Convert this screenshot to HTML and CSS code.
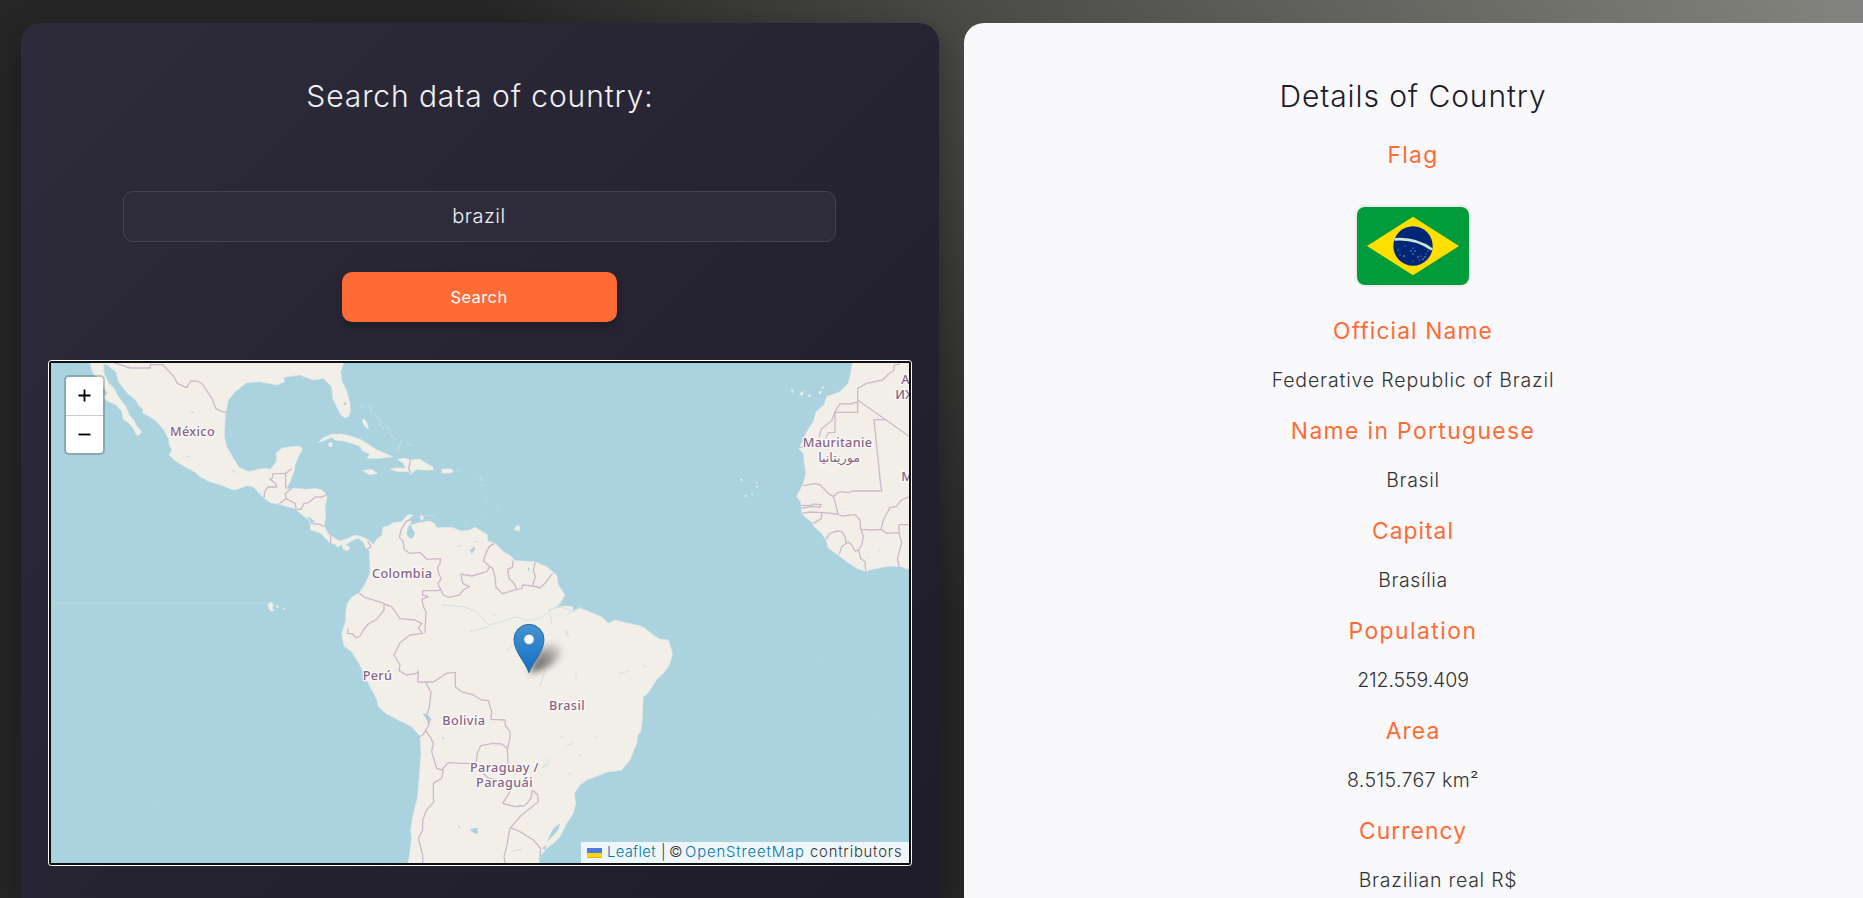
FILE: index.html
```html
<!DOCTYPE html>
<html lang="en">
<head>
<meta charset="utf-8">
<title>Search data of country</title>
<link rel="stylesheet" href="styles.css">
</head>
<body>
<main class="layout">
  <section class="card card-search">
    <h1 class="title title-search">Search data of country:</h1>
    <form class="form">
      <div class="field"><span class="field-value">brazil</span></div>
      <button class="button" type="button"><span>Search</span></button>
    </form>
    <div class="map">
      <svg class="map-canvas" viewBox="33 39 2574 1500" width="858" height="500">
        <defs>
          <linearGradient id="pin" x1="0" y1="0" x2="0" y2="1"><stop offset="0" stop-color="#4594d0"/><stop offset="1" stop-color="#126fc6"/></linearGradient>
          <filter id="soft" x="-50%" y="-50%" width="200%" height="200%"><feGaussianBlur stdDeviation="11"/></filter>
          <linearGradient id="shade" x1="0" y1="1" x2="1" y2="0"><stop offset="0" stop-color="#000" stop-opacity=".65"/><stop offset=".5" stop-color="#000" stop-opacity=".42"/><stop offset="1" stop-color="#000" stop-opacity=".02"/></linearGradient>
        </defs>
        <rect x="33" y="39" width="2574" height="1500" fill="#abd3df"/>
        <path d="M33 759H690" stroke="#b9d8dd" stroke-width="3"/>
        <g class="land">
          <path d="M150 36L155 60 163 75 178 86 190 110 203 130 192 140 200 152 225 163 245 183 250 208 265 218 280 235 287 252 295 257 305 245 290 228 280 208 268 195 258 170 235 140 222 115 205 98 192 70 190 42 205 46 213 54 228 65 236 95 262 130 285 148 298 168 310 178 307 188 320 195 345 210 372 240 385 265 388 285 396 300 387 315 405 332 435 350 465 366 480 380 510 395 545 406 580 420 600 415 620 407 640 411 668 440 690 458 715 462 740 470 765 475 780 490 800 505 810 515 812 540 840 548 860 568 870 580 885 583 893 592 905 583 910 598 920 603 930 596 925 588 915 585 935 572 955 565 970 576 980 598 988 602 990 640 990 670 975 703 958 728 935 742 922 760 918 780 917 812 905 852 912 888 935 905 960 945 985 1000 1010 1047 1015 1070 1040 1092 1070 1107 1115 1130 1140 1158 1143 1210 1138 1280 1132 1345 1118 1400 1112 1440 1115 1465 1108 1520 1102 1545H1500L1495 1525 1520 1495 1540 1480 1560 1460 1580 1420 1600 1390 1607 1360 1603 1330 1620 1305 1640 1290 1700 1267 1745 1260 1770 1230 1790 1180 1793 1155 1802 1146 1808 1100 1808 1070 1810 1040 1818 1035 1830 1020 1850 988 1870 970 1885 950 1895 925 1897 908 1885 870 1860 868 1840 855 1815 835 1800 827 1765 820 1725 810 1705 820 1685 800 1660 790 1620 774 1600 785 1597 770 1570 768 1550 775 1575 735 1555 705 1550 675 1520 650 1485 635 1425 632 1412 618 1390 605 1365 580 1343 573 1343 555 1328 545 1305 532 1290 540 1265 543 1235 532 1190 533 1183 520 1170 513 1135 518 1115 525 1108 505 1120 497 1112 492 1100 497 1085 515 1060 518 1045 528 1028 532 1027 555 1010 567 1000 585 990 573 970 562 945 555 920 567 900 573 880 562 865 552 852 528 857 500 855 470 862 435 845 420 825 415 800 418 765 415 738 418 750 395 762 365 765 345 775 320 787 298 780 289 750 290 725 295 708 310 710 333 692 358 675 355 655 358 625 365 597 352 590 340 580 325 560 290 553 260 556 195 565 150 585 125 620 98 660 95 710 105 735 95 730 82 780 75 820 90 850 85 875 110 878 145 890 170 903 195 915 204 925 200 931 185 930 160 920 122 905 92 902 65 912 36Z"/>
          <path d="M835 278L850 263 875 253 905 252 930 258 960 268 985 283 1010 300 1040 312 1058 320 1020 325 982 325 990 312 968 303 958 288 930 278 905 272 885 270 875 262 855 270Z"/>
          <path d="M1072 328L1095 325 1110 330 1140 327 1150 335 1178 350 1180 360 1150 360 1130 358 1120 365 1113 375 1105 365 1075 365 1050 358 1065 354 1097 355 1090 340ZM968 362L995 358 1012 370 990 375ZM1206 357H1235L1240 363 1232 369H1206ZM865 280L875 278 878 288 868 291ZM970 205L980 215 985 237 975 230 967 215ZM1427 528L1440 528 1438 543 1424 540ZM1140 498l8-2 3 10-7 5z"/>
          <path d="M2438 36L2431 75 2425 100 2400 125 2360 140 2352 165 2328 185 2320 215 2300 245 2287 275 2276 295 2290 310 2293 340 2298 370 2288 405 2270 440 2282 455 2285 490 2300 505 2315 515 2322 530 2345 550 2358 570 2365 595 2395 615 2420 635 2450 655 2477 664 2500 657 2550 648 2585 650 2600 657 2615 652V36Z"/>
          <path d="M684 762l12-6 4 12-6 6 10 6-12 4-6-10zM708 770l6-3 1 7zM730 775l5-2v6zM2255 118l5 3-3 8zM2280 130l10-6-2 10-6 3zM2303 136l7-3 1 9zM2335 128l8-6-2 10zM2343 115l9-7-2 6zM2100 388h7v6zM2148 396l5 2-4 2zM2148 408l7 2-5 4zM2133 433l5-2v5zM2114 437l7-2-3 6z"/>
        </g>
        <path class="islets" d="M960 171l12-3M985 165l10 8-1 12M1005 195l20 22M1015 215l15 24M1040 230l14 12M1045 248l18 10M1050 260l20 10M1085 270l-10 28-8 2M1100 280l15 7M1140 495l15 2M1160 500l10-5M1170 495l12 2M1250 362l12-1M1290 365l5 5M1300 382l6 4M1320 376l4 10M2332 930h4M2515 1106h4M344 1360v5M1325 388l6 5M1322 405l8 5M1334 421l3 6M1336 440l4 5M1338 457v5M1368 475l5 2M1323 498h4M1270 521l7 5"/>
        <g class="water">
          <path d="M1103 535L1110 520 1116 535 1125 548 1120 562 1110 566 1100 552ZM1290 600l12-10 3 8-10 15zM1462 655l8-3-3 12zM911 158l8-2-1 10-6-2zM800 500l12 4 14 12-12 2zM2295 515l8-3 2 8-8 2zM1147 1090l15 2 12 15-6 15-10-18zM1205 1160l10 5-5 3zM1288 1438l24-5 2 18-12-1zM1254 1426l6 3-3 6zM435 318l14 1-5 3zM445 186h18l-4 3zM576 358l9 8-3 3zM1540 1435l20-15-5 20-20 22-15 14zM1430 1367l16-3-10 9zM1505 1495l15-10-4 14z"/>
        </g>
        <g class="rivers">
          <path d="M1205 764L1270 770 1310 785 1345 825 1370 820 1400 810 1430 800 1460 812 1500 805 1540 775 1570 755M1290 845L1345 830M1400 905L1435 870 1430 835M1525 780L1560 770 1600 785M1620 770L1580 795M1735 970L1750 968 1768 962M1608 970v20M1525 1240L1508 1252 1530 1225M1575 845l10 15-5-20M1530 790l5 30M1500 1010l15-50M1560 1160l12 2M1580 1185l18-4M1667 1162l8-4M1615 1212l10 5M1580 1270l12 2M1250 590l15-3M1355 790l15 10M1810 945l12 6M1300 575l15-2M1475 1295l3 22M1415 1505l30-8M2412 475l8 4M2515 600l6 6M2483 622l8 0"/>
        </g>
        <g class="borders">
          <path d="M225 39L270 54H331V44H368L400 78 412 100 440 113 452 93H472L487 102 517 148 527 175 545 184 565 188M672 444L674 425 684 411H710L708 402 690 387 697 385 699 371H737V415M737 371L755 355M718 461L738 446 736 430 755 416M738 446L765 460 768 475M768 478L783 478 792 460 805 458 827 440 842 442 864 433M812 520L840 523 852 530M872 552V582M984 574L993 590 978 600M1111 330L1108 348 1105 354 1113 370"/>
          <path d="M1116 505L1098 515 1083 540 1078 562 1090 575 1092 597 1108 610 1140 607 1160 628 1202 626 1200 640 1193 652 1196 670 1204 687 1193 700 1210 735 1228 742 1258 735 1270 720 1288 710 1268 700 1263 672 1295 678 1340 665 1350 650 1330 632 1340 605 1348 590 1363 580M1205 716L1195 722H1148V735L1165 740 1146 748 1150 770 1158 785 1155 850M958 730L975 742 1032 760 1032 780 1010 808 985 822 970 840 960 858 948 864 938 852 922 850 925 835M1032 762L1055 770 1080 806 1125 810 1145 820 1135 835 1148 850 1110 855 1080 878 1062 915 1080 945 1077 962 1100 975 1130 970 1135 963 1134 996H1180L1220 970 1246 967 1246 1010 1265 1025 1300 1035 1325 1050 1345 1052 1350 1070 1355 1085 1353 1108 1396 1110 1395 1125 1410 1145 1410 1165 1402 1195 1404 1243"/>
          <path d="M1350 650L1358 655 1365 680 1368 712 1388 731 1430 718 1445 716 1448 705 1480 708 1500 714 1515 700 1538 670M1420 632L1417 652 1403 658 1407 685 1420 698 1430 716M1486 635L1480 660 1486 680 1478 705"/>
          <path d="M1157 996L1173 1028 1168 1070 1160 1098 1167 1125 1148 1155 1138 1160M1155 1140L1170 1160 1180 1180 1175 1205 1190 1255 1205 1260 1225 1238 1265 1240 1300 1240 1308 1242 1312 1210 1322 1187 1360 1180 1385 1182 1402 1195M1210 1258L1205 1285 1180 1300V1345L1182 1355 1160 1380 1148 1410 1148 1440 1135 1465 1148 1515V1545M1325 1265L1345 1285 1380 1290M1410 1325L1388 1360 1425 1370 1455 1367 1473 1345 1477 1320M1480 1322L1493 1335 1495 1355 1445 1395 1410 1435 1400 1490 1392 1520 1397 1545M1412 1433L1440 1445 1480 1470 1502 1495 1500 1518"/>
          <path d="M2580 41L2562 46V60L2545 73 2528 90 2480 100 2453 115V187H2385V247L2365 248 2357 265M2453 150L2610 261M2453 156L2430 162 2400 161 2385 185 2375 212 2345 236 2337 262M2540 209H2502L2522 405 2525 423H2438L2425 428 2400 425 2390 430 2380 440 2365 430 2340 405 2325 401 2290 407M2282 466L2310 467 2320 462 2343 464 2340 472 2320 469 2282 475M2286 490L2310 486 2350 488 2390 492 2405 498 2445 494 2460 510 2462 535 2470 560 2465 585 2456 600 2445 603 2435 585 2425 576 2405 590 2398 612M2380 440L2388 465 2394 492M2346 490L2344 506 2320 520M2358 567L2370 550 2390 543 2405 545 2415 560 2418 578M2462 538L2495 540 2523 538 2530 510 2550 472 2568 470 2585 450 2608 440M2523 538L2540 550 2577 548V524H2610M2577 548L2585 580 2572 625 2578 650M2456 600L2462 625 2475 635 2477 662M2276 292L2300 293"/>
        </g>
        <g class="labels">
          <text x="390" y="258" textLength="134">México</text>
          <text x="996" y="684" textLength="180">Colombia</text>
          <text x="968" y="991" textLength="88">Perú</text>
          <text x="1207" y="1125" textLength="128">Bolivia</text>
          <text x="1527" y="1081" textLength="107">Brasil</text>
          <text x="1290" y="1267" textLength="205">Paraguay /</text>
          <text x="1308" y="1311" textLength="170">Paraguái</text>
          <text x="2288" y="292" textLength="208">Mauritanie</text>
          <text class="arabic" x="2460" y="335" direction="rtl">موريتانيا</text>
          <text x="2584" y="103">A</text>
          <text x="2566" y="147">ИЖ</text>
          <text x="2584" y="392">M</text>
        </g>
        <path d="M1467 970L1490 915Q1510 880 1550 882 1580 895 1550 930Q1520 960 1467 970Z" fill="url(#shade)" filter="url(#soft)"/>
        <path d="M1467 968C1455 935 1422 905 1422 868A45 45 0 0 1 1512 868C1512 905 1479 935 1467 968Z" fill="url(#pin)" stroke="#2e6c9f" stroke-width="3"/>
        <circle cx="1467" cy="868" r="15.500" fill="#fff" stroke="#3180b8" stroke-width="2"/>
      </svg>
      <div class="zoom">
        <a class="zoom-button"><svg width="13" height="13" viewBox="0 0 13 13"><path d="M6.500 .5V12.500M.5 6.500H12.500" stroke="#000" stroke-width="1.800"/></svg></a>
        <a class="zoom-button"><svg width="13" height="13" viewBox="0 0 13 13"><path d="M.5 6.500H12.500" stroke="#000" stroke-width="1.800"/></svg></a>
      </div>
      <div class="attribution">
        <svg class="attribution-flag" width="15" height="10" viewBox="0 0 15 10"><path fill="#4c7be1" d="M0 0h15v5H0z"/><path fill="#ffd500" d="M0 5h15v4H0z"/><path fill="#e0bc00" d="M0 9h15v1H0z"/></svg>
        <a class="link link-leaflet">Leaflet</a><span class="bar">|</span><span class="copy">©</span><a class="link link-osm">OpenStreetMap</a><span class="contributors">contributors</span>
      </div>
    </div>
  </section>
  <section class="card card-details">
    <h2 class="title title-details">Details of Country</h2>
    <h3 class="label label-flag">Flag</h3>
    <div class="flag">
      <svg width="112" height="78" viewBox="0 0 112 78">
        <rect width="112" height="78" fill="#009b3a"/>
        <path d="M10 39L56 9.700 102 39 56 68.300Z" fill="#fedf00"/>
        <circle cx="56" cy="39" r="19.700" fill="#002776"/>
        <path d="M37.400 32.300Q59 30.500 75 42.500" fill="none" stroke="#cfe6d6" stroke-width="2.800"/>
        <g fill="#a9b9dc"><circle cx="41" cy="43" r=".6"/><circle cx="48" cy="39" r=".6"/><circle cx="43" cy="48" r=".6"/><circle cx="47" cy="49" r=".8"/><circle cx="56" cy="41" r=".6"/><circle cx="54" cy="44" r=".7"/><circle cx="58" cy="44" r=".7"/><circle cx="56" cy="47" r=".7"/><circle cx="56" cy="54" r=".5"/><circle cx="61" cy="50" r=".7"/><circle cx="64" cy="49" r=".6"/><circle cx="66" cy="52" r=".7"/><circle cx="69" cy="47" r=".6"/><circle cx="68" cy="50" r=".7"/><circle cx="63" cy="53" r=".6"/><circle cx="71" cy="44" r=".6"/><circle cx="62" cy="36" r=".7"/></g>
      </svg>
    </div>
    <dl class="facts">
      <dt class="label w-official">Official Name</dt><dd class="value v-official">Federative Republic of Brazil</dd>
      <dt class="label w-native">Name in Portuguese</dt><dd class="value v-native">Brasil</dd>
      <dt class="label w-capital">Capital</dt><dd class="value v-capital">Brasília</dd>
      <dt class="label w-population">Population</dt><dd class="value v-population">212.559.409</dd>
      <dt class="label w-area">Area</dt><dd class="value v-area">8.515.767 km²</dd>
      <dt class="label w-currency">Currency</dt><dd class="value v-currency">Brazilian real R$</dd>
    </dl>
  </section>
</main>
</body>
</html>
```
FILE: styles.css
```css
* { box-sizing: border-box; }
body {
  margin: 0;
  height: 898px;
  overflow: hidden;
  font-family: Inter, sans-serif;
  font-weight: 350;
  background: linear-gradient(52deg, #262626 0%, #262626 46%, #4a4a47 65%, #80807a 97%, #828282 100%);
}
.layout { display: flex; gap: 25px; padding: 23px 0 0 21px; width: 1882px; }
.card { height: 893px; border-radius: 20px; flex: none; width: 918px; text-align: center; }
.card-search {
  padding: 0 27px;
  background: linear-gradient(135deg, #2e2c3b, #1e1c2b);
  box-shadow: 0 10px 30px rgba(0, 0, 0, .3);
}
.card-details { width: 917px; padding-right: 19px; background: #f9f9fc; }
.title { margin: 0; font-weight: 350; font-size: 30px; line-height: 36px; padding-top: 55px; height: 91px; white-space: nowrap; }
.title-search { color: #f1f1f3; letter-spacing: .9px; }
.title-details { color: #1e1c2b; letter-spacing: .9px; }
.form { display: flex; flex-direction: column; align-items: center; gap: 30px; padding-top: 77px; margin: 0 2px 0 0; }
.field {
  width: 713px; height: 51px; border: 1px solid #43434a; border-radius: 10px;
  background: #2e2c3b; color: #f1f1f3; font-size: 20px; line-height: 48px; letter-spacing: .5px;
}
.button {
  width: 275px; height: 50px; border: 0; border-radius: 10px; background: #ff6b35; color: #fff;
  font: 400 16.500px/50px Inter, sans-serif; letter-spacing: .4px; padding: 0; box-shadow: 0 4px 8px rgba(0, 0, 0, .25);
}
.map {
  position: relative; margin: 39px 1px 0; width: 862px; height: 504px; border: 2px solid #101010;
  border-radius: 3px; box-shadow: 0 0 0 1px #fff;
}
.map-canvas { display: block; }
.land path { fill: #f2efe9; stroke: #e3e9e4; stroke-width: 2; stroke-linejoin: round; }
.islets { fill: none; stroke: #c9dfe0; stroke-width: 3; }
.water path { fill: #abd3df; }
.rivers path { fill: none; stroke: #cfe1e2; stroke-width: 3; }
.borders path { fill: none; stroke: #cdb9c9; stroke-width: 4; stroke-linejoin: round; }
.labels text {
  font-family: "Noto Sans", sans-serif; font-size: 38px; font-weight: 500; fill: #856485;
  paint-order: stroke; stroke: #fbf9f7; stroke-width: 8px; stroke-linejoin: round;
}
.labels .arabic { font-family: "DejaVu Sans", sans-serif; font-size: 38px; }
.zoom {
  position: absolute; left: 13px; top: 12px; width: 41px; height: 80px; border: 2px solid rgba(0, 0, 0, .2);
  border-radius: 5px; background: #fff; background-clip: padding-box; display: flex; flex-direction: column;
}
.zoom-button { flex: 1; display: flex; align-items: center; justify-content: center; }
.zoom-button + .zoom-button { border-top: 1px solid #ccc; }
.attribution {
  position: absolute; right: 0; bottom: 0; width: 328px; height: 21px; padding: 0 6px; display: flex;
  align-items: center; background: rgba(255, 255, 255, .8); font-size: 14.800px; line-height: 21px; color: #333; white-space: nowrap;
}
.attribution-flag { margin-right: 5px; flex: none; }
.link { color: #0078a8; flex: none; }
.link-leaflet { width: 54px; text-align: left; letter-spacing: .3px; }
.bar { width: 8px; text-align: left; flex: none; }
.copy { width: 16px; text-align: left; flex: none; }
.link-osm { width: 125px; text-align: left; letter-spacing: .9px; }
.contributors { letter-spacing: .8px; }
.label { margin: 0; font-weight: 380; font-size: 22.800px; line-height: 29px; color: #ff6b35; }
.label-flag { padding-top: 26px; height: 93px; letter-spacing: 1.3px; }
.flag { width: 112px; height: 78px; margin: 0 auto; border-radius: 8px; box-shadow: 0 0 2px 2px rgba(0, 0, 0, .06); overflow: hidden; }
.flag svg { display: block; }
.facts { margin: 31px 0 0; }
.facts .label { height: 51px; }
.value { margin: 0; height: 49px; font-size: 19.500px; line-height: 26px; color: #333; }
.w-official { letter-spacing: 1.1px; }
.w-native { letter-spacing: 1.4px; }
.w-capital { letter-spacing: 1px; }
.w-population { letter-spacing: 1.5px; }
.w-area { letter-spacing: 1.1px; }
.w-currency { letter-spacing: 1.1px; }
.v-official { letter-spacing: .85px; }
.v-native { letter-spacing: .7px; }
.v-capital { letter-spacing: .6px; }
.v-population { letter-spacing: -.1px; }
.v-area { letter-spacing: .4px; }
.v-currency { padding-left: 50px; letter-spacing: .75px; }
```
